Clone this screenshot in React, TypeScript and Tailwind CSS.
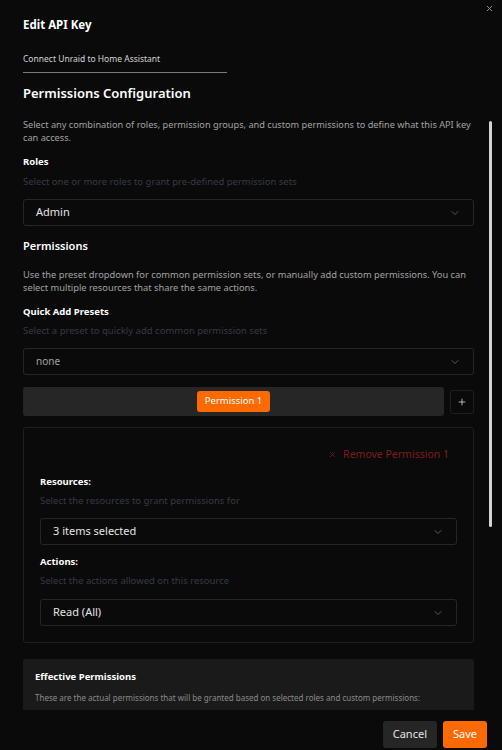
import { ChevronDown, Plus, X } from "lucide-react";

const font = { fontFamily: '"Noto Sans", "Open Sans", sans-serif' };

function Select({ value, muted }: { value: string; muted?: boolean }) {
  return (
    <div className="flex h-[27px] items-center justify-between rounded-[3px] border border-[#262626] px-3">
      <span className={muted ? "text-[10px] text-[#a3a3a3]" : "text-[11px] text-[#e5e5e5]"}>{value}</span>
      <ChevronDown className="h-3 w-3 text-[#737373]" strokeWidth={1.5} />
    </div>
  );
}

export default function App() {
  return (
    <div style={font} className="relative flex h-[750px] w-[502px] flex-col overflow-hidden bg-[#0a0a0a] text-white">
      <button className="absolute right-[8px] top-[4px] text-[#9a9a9a]">
        <X className="h-[9px] w-[9px]" strokeWidth={2.5} />
      </button>

      <div className="px-[23px] pt-[16px]">
        <h1 className="text-[11.5px] font-bold leading-[18px]">Edit API Key</h1>
        <div className="mt-[19px] w-[204px]">
          <div className="text-[8.5px] leading-[12px] text-[#d4d4d4]">Connect Unraid to Home Assistant</div>
          <div className="mt-[7px] h-px bg-[#7a7a7a]" />
        </div>
      </div>

      <div className="relative flex-1 overflow-hidden">
        <div className="absolute right-[10px] top-[48px] h-[406px] w-[3px] rounded-full bg-[#d4d4d4]" />
        <div className="h-[637px] overflow-hidden pl-[23px] pr-[28px] pt-[11px]">
          <h2 className="text-[13px] font-semibold leading-[18px]">Permissions Configuration</h2>
          <p className="mr-[-10px] mt-[16px] text-[9.2px] leading-[13px] text-[#a3a3a3]">
            Select any combination of roles, permission groups, and custom permissions to define what this API key can access.
          </p>

          <div className="mt-[11px] text-[9.5px] font-bold leading-[13px]">Roles</div>
          <div className="mt-[7px] text-[9.5px] leading-[13px] text-[#343b48]">
            Select one or more roles to grant pre-defined permission sets
          </div>
          <div className="mt-[11px]">
            <Select value="Admin" />
          </div>

          <h3 className="mt-[12px] text-[11px] font-semibold leading-[16px]">Permissions</h3>
          <p className="mt-[14px] text-[9.3px] leading-[13px] text-[#a3a3a3]">
            Use the preset dropdown for common permission sets, or manually add custom permissions. You can select multiple resources that share the same actions.
          </p>
          <div className="mt-[11px] text-[9.5px] font-bold leading-[13px]">Quick Add Presets</div>
          <div className="mt-[6px] text-[9.5px] leading-[13px] text-[#343b48]">
            Select a preset to quickly add common permission sets
          </div>
          <div className="mt-[11px]">
            <Select value="none" muted />
          </div>

          <div className="mt-[12px] flex items-center gap-[6px]">
            <div className="flex h-[29px] flex-1 items-center justify-center rounded-[3px] bg-[#262626]">
              <button className="h-[21px] rounded-[3px] bg-[#ff6a00] px-[8px] text-[9.5px] text-white">Permission 1</button>
            </div>
            <button className="flex h-[24px] w-[24px] items-center justify-center rounded-[3px] border border-[#1f1f1f]">
              <Plus className="h-[10px] w-[10px] text-[#d4d4d4]" strokeWidth={2} />
            </button>
          </div>

          <div className="mt-[11px] rounded-[3px] border border-[#1f1f1f] px-[16px] pb-[16px] pt-[19px]">
            <div className="flex justify-end pr-[8px]">
              <span className="flex items-center gap-[6px] text-[10.5px] leading-[14px] text-[#7f1d1d]">
                <X className="h-[9px] w-[9px]" strokeWidth={2} />
                Remove Permission 1
              </span>
            </div>
            <div className="mt-[14px] text-[9.5px] font-bold leading-[13px]">Resources:</div>
            <div className="mt-[6px] text-[9.5px] leading-[13px] text-[#343b48]">
              Select the resources to grant permissions for
            </div>
            <div className="mt-[11px]">
              <Select value="3 items selected" />
            </div>
            <div className="mt-[10px] text-[9.5px] font-bold leading-[13px]">Actions:</div>
            <div className="mt-[6px] text-[9.5px] leading-[13px] text-[#343b48]">
              Select the actions allowed on this resource
            </div>
            <div className="mt-[12px]">
              <Select value="Read (All)" />
            </div>
          </div>

          <div className="mt-[16px] rounded-[3px] bg-[#1a1a1a] px-[12px] pb-[10px] pt-[11px]">
            <div className="text-[9.5px] font-bold leading-[13px]">Effective Permissions</div>
            <div className="mt-[9px] text-[8px] leading-[12px] text-[#8a8a8a]">
              These are the actual permissions that will be granted based on selected roles and custom permissions:
            </div>
          </div>
        </div>
      </div>

      <div className="flex justify-end gap-[6px] px-[15px] pb-[2px]">
        <button className="h-[27px] rounded-[3px] bg-[#262626] px-[10px] text-[11px] text-[#e5e5e5]">Cancel</button>
        <button className="h-[27px] rounded-[3px] bg-[#ff6a00] px-[10px] text-[11px] text-white">Save</button>
      </div>
    </div>
  );
}
